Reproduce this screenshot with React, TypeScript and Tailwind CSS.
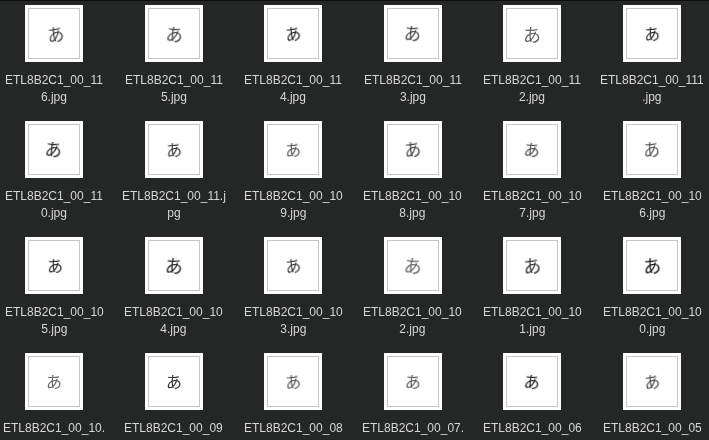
const files: [string, string, number, number, number, string, number][] = [
  ["ETL8B2C1_00_11", "6.jpg", -8, 1, 0, "#444", 17],
  ["ETL8B2C1_00_11", "5.jpg", 6, 1, 0, "#444", 17],
  ["ETL8B2C1_00_11", "4.jpg", -8, 0, -1, "#222", 16],
  ["ETL8B2C1_00_11", "3.jpg", 4, 0, -1, "#444", 17],
  ["ETL8B2C1_00_11", "2.jpg", 0, 0, 0, "#666", 18],
  ["ETL8B2C1_00_111", ".jpg", -4, 0, -1, "#222", 16],
  ["ETL8B2C1_00_11", "0.jpg", 6, -1, -1, "#222", 17],
  ["ETL8B2C1_00_11.j", "pg", -4, 0, -1, "#333", 16],
  ["ETL8B2C1_00_10", "9.jpg", -4, 0, -1, "#555", 16],
  ["ETL8B2C1_00_10", "8.jpg", -6, 0, -1, "#444", 17],
  ["ETL8B2C1_00_10", "7.jpg", 6, 0, -1, "#444", 16],
  ["ETL8B2C1_00_10", "6.jpg", -4, 0, -1, "#555", 17],
  ["ETL8B2C1_00_10", "5.jpg", -3, 1, -1, "#222", 16],
  ["ETL8B2C1_00_10", "4.jpg", 4, 0, -1, "#222", 18],
  ["ETL8B2C1_00_10", "3.jpg", -8, 0, -1, "#333", 16],
  ["ETL8B2C1_00_10", "2.jpg", 6, 0, -1, "#666", 18],
  ["ETL8B2C1_00_10", "1.jpg", -6, 0, -1, "#333", 18],
  ["ETL8B2C1_00_10", "0.jpg", -5, 0, -1, "#111", 18],
  ["ETL8B2C1_00_10.", "jpg", 0, 0, -1, "#666", 16],
  ["ETL8B2C1_00_09", ".jpg", 0, 0, -1, "#333", 16],
  ["ETL8B2C1_00_08", ".jpg", -6, 0, -1, "#555", 16],
  ["ETL8B2C1_00_07.", "jpg", 4, 0, -1, "#555", 16],
  ["ETL8B2C1_00_06", ".jpg", 6, 0, -1, "#111", 16],
  ["ETL8B2C1_00_05", ".jpg", -8, 0, -1, "#444", 16],
];

export default function App() {
  return (
    <div className="h-[440px] w-[709px] overflow-hidden bg-[#252726] border-t border-[#0c0c0c] pt-[4px] font-['Liberation_Sans',sans-serif]">
      <div className="grid grid-cols-[repeat(6,108px)] gap-x-[11.6px]">
        {files.map(([a, b, rot, dx, dy, color, size], i) => (
          <div key={i} className="h-[116px] flex flex-col items-center">
            <div className="w-[58px] h-[57px] bg-white p-[3px] shrink-0">
              <div className="w-full h-full border border-[#c6c6c6] flex items-center justify-center">
                <span
                  className="leading-none font-normal font-['Noto_Sans_CJK_JP',sans-serif] will-change-transform"
                  style={{ transform: `translate(${dx}px, ${dy}px) rotate(${rot}deg)`, color, fontSize: size }}
                >
                  あ
                </span>
              </div>
            </div>
            <div className="mt-[10px] text-[12px] leading-[17px] text-[#d6d6d6] text-center whitespace-nowrap will-change-transform">
              <div>{a}</div>
              <div>{b}</div>
            </div>
          </div>
        ))}
      </div>
    </div>
  );
}
